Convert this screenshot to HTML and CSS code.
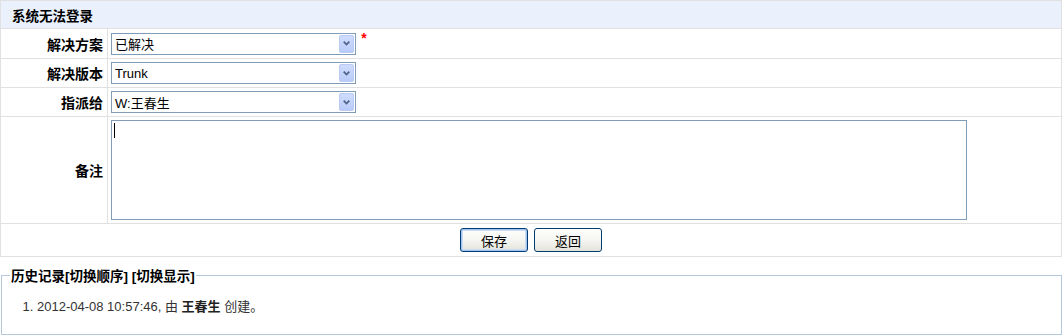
FILE: index.html
```html
<!DOCTYPE html>
<html lang="zh-CN">

<head>
    <meta charset="UTF-8">
    <title>解决Bug</title>
    <link rel="stylesheet" href="styles.css">
</head>

<body>
    <!-- Resolve form -->
    <table class="form-table">
        <tr class="caption-row">
            <th colspan="2">系统无法登录</th>
        </tr>
        <tr class="first-row">
            <th class="label">解决方案</th>
            <td>
                <div class="select">
                    <span class="select-value">已解决</span>
                    <span class="select-arrow"><svg width="7" height="5" viewBox="0 0 7 5"><path d="M0.7 0.7 L3.5 3.6 L6.3 0.7" stroke="#4d6185" stroke-width="1.7" fill="none"/></svg></span>
                </div>
                <span class="required">*</span>
            </td>
        </tr>
        <tr>
            <th class="label">解决版本</th>
            <td>
                <div class="select">
                    <span class="select-value">Trunk</span>
                    <span class="select-arrow"><svg width="7" height="5" viewBox="0 0 7 5"><path d="M0.7 0.7 L3.5 3.6 L6.3 0.7" stroke="#4d6185" stroke-width="1.7" fill="none"/></svg></span>
                </div>
            </td>
        </tr>
        <tr>
            <th class="label">指派给</th>
            <td>
                <div class="select">
                    <span class="select-value">W:王春生</span>
                    <span class="select-arrow"><svg width="7" height="5" viewBox="0 0 7 5"><path d="M0.7 0.7 L3.5 3.6 L6.3 0.7" stroke="#4d6185" stroke-width="1.7" fill="none"/></svg></span>
                </div>
            </td>
        </tr>
        <tr class="comment-row">
            <th class="label">备注</th>
            <td>
                <div class="textarea"><span class="caret"></span></div>
            </td>
        </tr>
        <tr class="button-row">
            <td colspan="2">
                <div class="buttons">
                    <button class="btn btn-focus">保存</button>
                    <button class="btn">返回</button>
                </div>
            </td>
        </tr>
    </table>

    <!-- History -->
    <fieldset class="history">
        <legend>历史记录<a href="#">[切换顺序]</a> <a href="#">[切换显示]</a></legend>
        <ol>
            <li>2012-04-08 10:57:46, 由 <strong>王春生</strong> 创建。</li>
        </ol>
    </fieldset>
</body>

</html>
```

FILE: styles.css
```css
body {
    margin: 0;
    font-family: "Liberation Sans", "Noto Sans CJK SC", sans-serif;
    font-size: 12px;
    color: #000;
    background: #fff;
}

.form-table {
    width: 1062px;
    border-collapse: collapse;
    border: 1px solid #e1e1e1;
}

.form-table th,
.form-table td {
    border: 1px solid #e1e1e1;
    padding: 0 0 0 3px;
    height: 28px;
}

.caption-row th {
    height: 27px;
    background: #eaf1fd;
    text-align: left;
    padding-left: 11px;
    font-size: 13.5px;
}

.first-row th,
.first-row td {
    height: 29px;
}

.label {
    width: 99px;
    text-align: right;
    font-size: 14px;
    padding-right: 4px !important;
}

.select {
    display: inline-flex;
    align-items: center;
    vertical-align: middle;
    box-sizing: border-box;
    width: 245px;
    height: 22px;
    border: 1px solid #7f9db9;
    background: #fff;
    padding: 0 1px 0 3px;
}

.select-value {
    flex: 1;
    font-size: 13px;
}

.select-arrow {
    display: flex;
    align-items: center;
    justify-content: center;
    width: 15px;
    height: 18px;
    box-sizing: border-box;
    border: 1px solid #bccbf3;
    border-radius: 2px;
    background: linear-gradient(#cfdcfd, #b9cbf9);
}

.required {
    color: #f00;
    font-weight: bold;
    font-size: 14px;
    vertical-align: top;
    margin-left: 2px;
    position: relative;
    top: -3px;
}

.comment-row th,
.comment-row td {
    height: 106px;
}

.textarea {
    box-sizing: border-box;
    width: 856px;
    height: 100px;
    border: 1px solid #7f9db9;
    padding: 2px 2px;
}

.caret {
    display: block;
    width: 1px;
    height: 15px;
    background: #000;
}

.button-row td {
    height: 32px;
    padding: 0;
}

.buttons {
    display: flex;
    justify-content: center;
    gap: 6px;
}

.btn {
    width: 68px;
    height: 24px;
    border: 1px solid #003c74;
    border-radius: 3px;
    background: linear-gradient(#ffffff, #f4f4f0 55%, #e4e3da);
    font-family: "Liberation Sans", "Noto Sans CJK SC", sans-serif;
    font-size: 13px;
    color: #000;
    padding: 0;
}

.btn-focus {
    box-shadow: inset 0 0 0 1px #a8c4ee, inset 0 0 0 2px #cbdcf6;
}

.history {
    margin: 8px 0 0 1px;
    width: 1061px;
    box-sizing: border-box;
    padding: 0;
    border: 1px solid #b4c8dd;
}

.history legend {
    margin-left: 8px;
    padding: 0 1px;
    font-size: 13.5px;
    font-weight: bold;
}

.history legend a {
    color: #000;
    text-decoration: none;
}

.history ol {
    margin: 13px 0 18px;
    padding-left: 35px;
    color: #333;
    font-size: 13px;
    line-height: 18px;
}

.history strong {
    color: #222;
}
```
